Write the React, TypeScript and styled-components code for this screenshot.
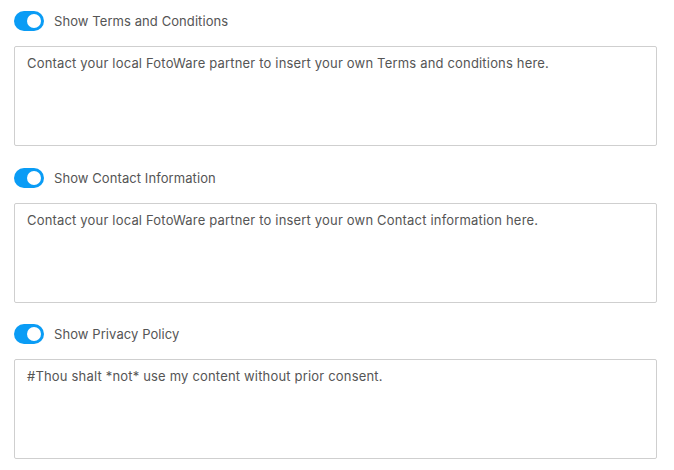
import React, { useState } from "react";
import styled, { createGlobalStyle } from "styled-components";

const Global = createGlobalStyle`
  html, body { margin: 0; padding: 0; background: #fff; }
  body { font-family: Inter, "Noto Sans", Arial, sans-serif; }
  * { box-sizing: border-box; }
`;

const Page = styled.div`
  display: flex;
  flex-direction: column;
  gap: 21.5px;
  padding: 11px 17px 0 14px;
`;

const Section = styled.section`
  display: flex;
  flex-direction: column;
  gap: 15px;
`;

const ToggleRow = styled.label`
  display: flex;
  align-items: center;
  gap: 10px;
  height: 20px;
  cursor: pointer;
`;

const Track = styled.span<{ $on: boolean }>`
  position: relative;
  width: 30px;
  height: 20px;
  border-radius: 10px;
  background: ${(p) => (p.$on ? "#0a9cf5" : "#c7c7c7")};
  flex: none;
`;

const Knob = styled.span<{ $on: boolean }>`
  position: absolute;
  top: 3px;
  left: ${(p) => (p.$on ? "13px" : "3px")};
  width: 14px;
  height: 14px;
  border-radius: 50%;
  background: #fff;
`;

const Label = styled.span`
  font-size: 13px;
  letter-spacing: 0.08px;
  color: #555;
`;

const Area = styled.textarea`
  display: block;
  width: 100%;
  height: 100px;
  resize: none;
  border: 1px solid #cfcfcf;
  border-radius: 2px;
  padding: 7px 12px;
  font-family: Inter, "Noto Sans", Arial, sans-serif;
  font-size: 13px;
  letter-spacing: 0.18px;
  line-height: 18px;
  color: #555;
  outline: none;
`;

const items = [
  {
    label: "Show Terms and Conditions",
    text: "Contact your local FotoWare partner to insert your own Terms and conditions here.",
  },
  {
    label: "Show Contact Information",
    text: "Contact your local FotoWare partner to insert your own Contact information here.",
  },
  {
    label: "Show Privacy Policy",
    text: "#Thou shalt *not* use my content without prior consent.",
  },
];

function Item({ label, text }: { label: string; text: string }) {
  const [on, setOn] = useState(true);
  return (
    <Section>
      <ToggleRow onClick={() => setOn(!on)}>
        <Track $on={on}>
          <Knob $on={on} />
        </Track>
        <Label>{label}</Label>
      </ToggleRow>
      <Area defaultValue={text} spellCheck={false} />
    </Section>
  );
}

export default function App() {
  return (
    <>
      <Global />
      <Page>
        {items.map((it) => (
          <Item key={it.label} {...it} />
        ))}
      </Page>
    </>
  );
}
